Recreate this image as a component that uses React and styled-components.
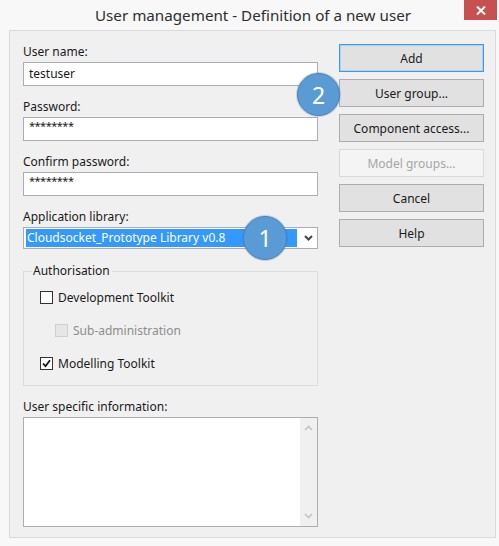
import React from 'react';
import styled, { createGlobalStyle } from 'styled-components';

const GlobalStyle = createGlobalStyle`
  html, body {
    margin: 0;
    padding: 0;
    background: #f7f7f7;
  }
  body {
    font-family: "Noto Sans", "Liberation Sans", sans-serif;
    font-size: 12px;
    color: #000;
  }
`;

const Window = styled.div`
  width: 499px;
  height: 546px;
  background: #f8f8f8;
  display: flex;
  flex-direction: column;
  box-sizing: border-box;
`;

const TitleBar = styled.div`
  height: 30px;
  display: flex;
  align-items: flex-start;
  flex-shrink: 0;
`;

const Title = styled.div`
  flex: 1;
  text-align: center;
  padding-left: 42px;
  font-size: 15.2px;
  line-height: 31px;
  color: #2e2e2e;
`;

const CloseBtn = styled.div`
  width: 33px;
  height: 20px;
  margin-right: 2px;
  background: #c75050;
  display: flex;
  align-items: center;
  justify-content: center;
`;

// Dialogfläche
const Body = styled.div`
  position: relative;
  flex: 1;
  margin: 0 3px 8px 9px;
  background: #f0f0f0;
  border: 1px solid #dadada;
  display: flex;
  gap: 21px;
  padding: 13px 0 0 13px;
`;

const LeftCol = styled.div`
  width: 295px;
  display: flex;
  flex-direction: column;
`;

const RightCol = styled.div`
  width: 145px;
  display: flex;
  flex-direction: column;
  gap: 7px;
`;

const Field = styled.div`
  display: flex;
  flex-direction: column;
  margin-bottom: ${p => p.$mb ?? 13}px;
`;

const Label = styled.div`
  line-height: 16px;
  height: 16px;
  margin-bottom: 2px;
  color: #1a1a1a;
`;

const TextBox = styled.div`
  position: relative;
  height: 24px;
  box-sizing: border-box;
  background: #fff;
  border: 1px solid #abadb3;
  padding: 0 5px;
  line-height: 22px;
  font-size: ${p => (p.$secret ? '11px' : '12px')};
  letter-spacing: ${p => (p.$secret ? '-0.5px' : '0')};
  ${p => p.$secret && 'line-height: 16px;'}
  color: #1a1a1a;
`;

const Select = styled.div`
  position: relative;
  height: 22px;
  box-sizing: border-box;
  background: #fff;
  border: 1px solid #abadb3;
  display: flex;
  align-items: center;
  padding: 0 0 0 2px;
`;

const Selected = styled.div`
  width: 271px;
  height: 18px;
  background: #3399ff;
  color: #fff;
  font-size: 12px;
  line-height: 18px;
  padding-left: 1px;
  box-sizing: border-box;
  white-space: nowrap;
  overflow: hidden;
`;

const DropArrow = styled.div`
  flex: 1;
  display: flex;
  align-items: center;
  justify-content: center;
  padding-left: 2px;
`;

const Group = styled.fieldset`
  margin: 14px 0 13px 0;
  padding: 8px 0 12px 8px;
  border: 1px solid #dcdcdc;
  display: flex;
  flex-direction: column;
  gap: 13px;
`;

const Legend = styled.legend`
  padding: 0 2px 0 1px;
  line-height: 16px;
  color: #1a1a1a;
`;

const CheckRow = styled.div`
  height: 20px;
  display: flex;
  align-items: center;
  gap: 5px;
  padding-left: ${p => (p.$indent ? 23 : 8)}px;
  color: ${p => (p.$disabled ? '#8d8d8d' : '#1a1a1a')};
`;

const Box = styled.div`
  width: 13px;
  height: 13px;
  box-sizing: border-box;
  border: 1px solid ${p => (p.$disabled ? '#cfcfcf' : '#333')};
  background: ${p => (p.$disabled ? '#e6e6e6' : '#fff')};
  display: flex;
  align-items: center;
  justify-content: center;
`;

const Memo = styled.div`
  height: 110px;
  box-sizing: border-box;
  background: #fff;
  border: 1px solid #abadb3;
  display: flex;
  justify-content: flex-end;
`;

const ScrollBar = styled.div`
  width: 17px;
  background: #f0f0f0;
  display: flex;
  flex-direction: column;
  justify-content: space-between;
  align-items: center;
  padding: 7px 0 7px;
`;

const Button = styled.div`
  height: 28px;
  box-sizing: border-box;
  border: 1px solid ${p => (p.$default ? '#3c9ae8' : p.$disabled ? '#d9d9d9' : '#adadad')};
  background: ${p => (p.$disabled ? '#f4f4f4' : '#e1e1e1')};
  ${p => p.$default && 'box-shadow: inset 0 0 0 1px #a9d3f5;'}
  color: ${p => (p.$disabled ? '#a6a6a6' : '#1a1a1a')};
  display: flex;
  align-items: center;
  justify-content: center;
  font-size: 12px;
`;

const Badge = styled.div`
  position: absolute;
  width: ${p => p.$size}px;
  height: ${p => p.$size}px;
  border-radius: 50%;
  background: #5b9bd5;
  border: 1px solid #4a83b8;
  box-sizing: border-box;
  color: #fff;
  font-size: 23px;
  display: flex;
  align-items: center;
  justify-content: center;
  box-shadow: 0 0 0 1px rgba(65, 113, 156, 0.25);
`;

const Chevron = ({ up, color = '#c4c4c4', w = 9, sw = 1.6 }) => (
  <svg width={w} height="6" viewBox="0 0 9 6">
    <path
      d={up ? 'M1 5 L4.5 1.5 L8 5' : 'M1 1 L4.5 4.5 L8 1'}
      fill="none"
      stroke={color}
      strokeWidth={sw}
    />
  </svg>
);

const Check = ({ label, checked, disabled, indent }) => (
  <CheckRow $indent={indent} $disabled={disabled}>
    <Box $disabled={disabled}>
      {checked && (
        <svg width="9" height="9" viewBox="0 0 9 9">
          <path d="M1 4.5 L3.5 7.2 L8 1.2" fill="none" stroke="#111" strokeWidth="1.8" />
        </svg>
      )}
    </Box>
    {label}
  </CheckRow>
);

export default function App() {
  return (
    <>
      <GlobalStyle />
      <Window>
        <TitleBar>
          <Title>User management - Definition of a new user</Title>
          <CloseBtn>
            <svg width="10" height="9" viewBox="0 0 10 9">
              <path d="M1 0.5 L9 8.5 M9 0.5 L1 8.5" stroke="#fff" strokeWidth="2" />
            </svg>
          </CloseBtn>
        </TitleBar>
        <Body>
          <LeftCol>
            <Field>
              <Label>User name:</Label>
              <TextBox>testuser</TextBox>
            </Field>
            <Field>
              <Label>Password:</Label>
              <TextBox $secret>********</TextBox>
            </Field>
            <Field>
              <Label>Confirm password:</Label>
              <TextBox $secret>********</TextBox>
            </Field>
            <Field $mb={0}>
              <Label>Application library:</Label>
              <Select>
                <Selected>Cloudsocket_Prototype Library v0.8</Selected>
                <DropArrow>
                  <Chevron color="#444" sw={2} />
                </DropArrow>
                <Badge $size={44} style={{ left: 219, top: -12 }}>1</Badge>
              </Select>
            </Field>
            <Group>
              <Legend>Authorisation</Legend>
              <Check label="Development Toolkit" />
              <Check label="Sub-administration" disabled indent />
              <Check label="Modelling Toolkit" checked />
            </Group>
            <Field $mb={0}>
              <Label>User specific information:</Label>
              <Memo>
                <ScrollBar>
                  <Chevron up />
                  <Chevron />
                </ScrollBar>
              </Memo>
            </Field>
          </LeftCol>
          <RightCol>
            <Button $default>Add</Button>
            <Button>User group...</Button>
            <Button>Component access...</Button>
            <Button $disabled>Model groups...</Button>
            <Button>Cancel</Button>
            <Button>Help</Button>
          </RightCol>
          <Badge $size={43} style={{ left: 287, top: 42 }}>2</Badge>
        </Body>
      </Window>
    </>
  );
}
